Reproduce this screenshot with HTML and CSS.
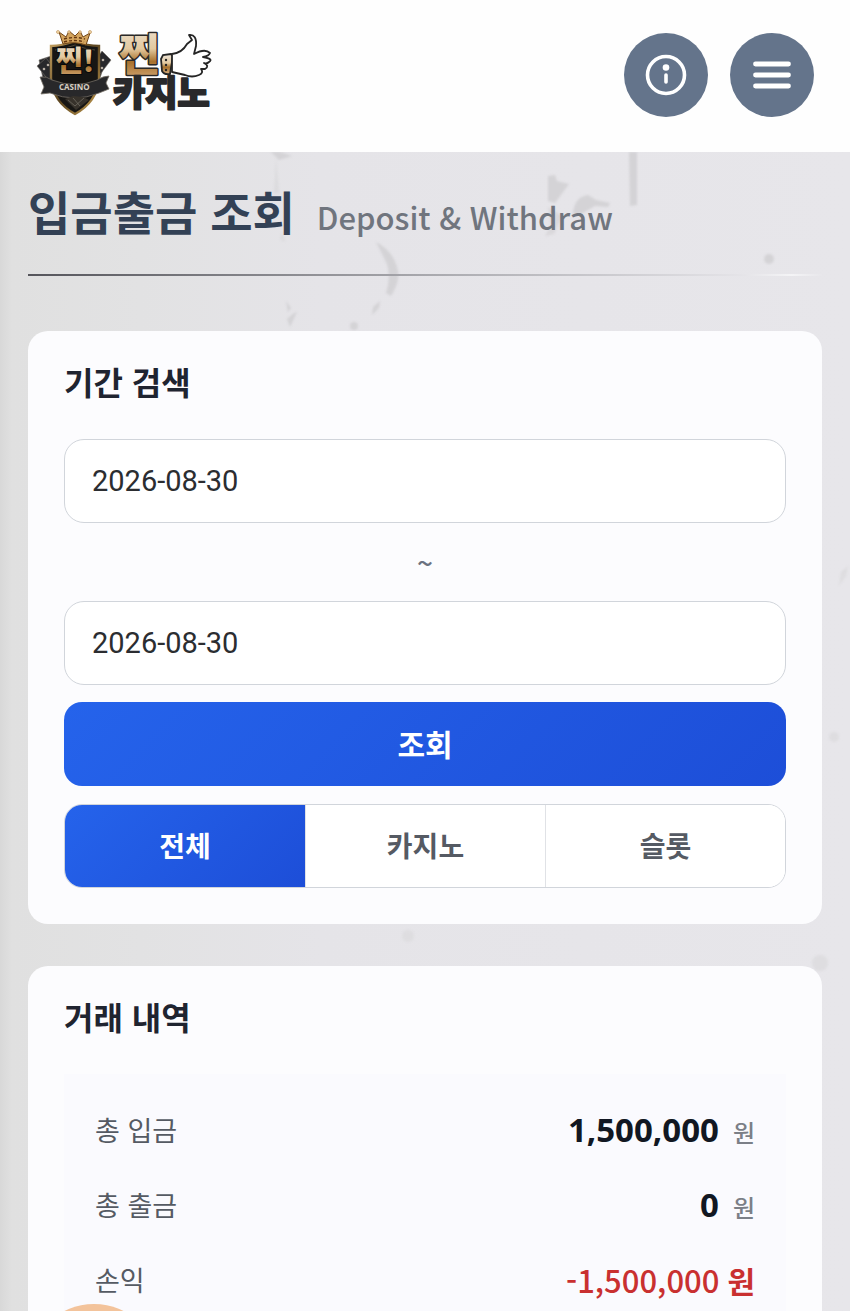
FILE: index.html
```html
<!DOCTYPE html>
<html lang="ko">
<head>
<meta charset="utf-8">
<meta name="viewport" content="width=device-width, initial-scale=1">
<title>입금출금 조회</title>
<link rel="stylesheet" href="styles.css">
</head>
<body>
<header class="topbar">
  <a class="logo" href="#" aria-label="찐 카지노">
    <svg width="180" height="92" viewBox="0 0 180 92">
      <defs>
        <linearGradient id="gold" x1="0" y1="0" x2="0" y2="1">
          <stop offset="0" stop-color="#eee6dc"/><stop offset="0.45" stop-color="#e3c99f"/><stop offset="0.65" stop-color="#a8712c"/><stop offset="1" stop-color="#d9b183"/>
        </linearGradient>
        <linearGradient id="rim" x1="0" y1="0" x2="1" y2="1">
          <stop offset="0" stop-color="#c4a05f"/><stop offset="0.5" stop-color="#5b4520"/><stop offset="1" stop-color="#c9a052"/>
        </linearGradient>
      </defs>
      <g fill="#28282b" stroke="#77726b" stroke-width="0.6">
        <path d="M3 31l12-4 5 22-12 5z"/><path d="M1 37l9-8 13 16-9 8z"/>
        <path d="M59 23l12 5-7 21-11-4z"/><path d="M66 22l9 9-13 17-9-7z"/>
      </g>
      <g fill="#b8aea4"><circle cx="8" cy="40" r="1.300"/><circle cx="12" cy="36" r="1.300"/><circle cx="67" cy="31" r="1.300"/><circle cx="66" cy="39" r="1.300"/></g>
      <path d="M15 17Q26 17 39 12Q52 17 63 17V50Q61 73 39 85Q17 73 15 50Z" fill="#171614" stroke="url(#rim)" stroke-width="2.4"/>
      <path d="M19 21Q29 20 39 16Q49 20 59 21" fill="none" stroke="#4d4435" stroke-width="1"/>
      <path d="M23 3l7 5 3-6 6 5 5-5 3 6 7-4-4 12Q39 12 27 15Z" fill="#d4a45d" stroke="#704417" stroke-width="1"/>
      <path d="M28 10q11-3 21 0M28 13q11-3 20 0" fill="none" stroke="#63340f" stroke-width="1.4" stroke-dasharray="3 2"/>
      <g fill="#f4dcae" stroke="#a8712c" stroke-width="0.5"><circle cx="22" cy="3" r="1.5"/><circle cx="33" cy="3" r="1.3"/><circle cx="44" cy="3" r="1.3"/><circle cx="54" cy="3" r="1.5"/></g>
      <text class="logo-badge" x="20" y="43">찐!</text>
      <path d="M4 48q7-1 12 3Q39 60 61 51q6-4 12-4l-3 7 3 6-10 4Q39 74 14 64L5 65l3-7Z" fill="#28282a" stroke="#756f66" stroke-width="0.8"/>
      <text class="logo-casino" x="23" y="61">CASINO</text>
      <path d="M29 70l8-3 10 1 6 3-13 10Z" fill="#37322b"/><path d="M32 71l7 6 9-8M37 69l7 8" stroke="#79746a" fill="none" stroke-width="0.7"/>
      <text class="logo-top" x="83" y="42">찐</text>
      <text class="logo-bottom" x="77" y="77">카지노</text>
      <path d="M135 25l-8 1-2 4 1 12q2 4 8 3l3-18Z" fill="url(#gold)" stroke="#242424" stroke-width="1.800"/>
      <path d="M136 25Q146 24 151 15L156 11L153 6Q161 5 160 17L158 25Q169 19 174 24Q173 27 167 28Q178 30 173 33Q171 35 168 34Q174 37 169 40L165 40Q168 44 163 46Q156 49 149 46L136 43Z" fill="#fff" stroke="#252525" stroke-width="1.8" stroke-linejoin="round"/>
      <g fill="#252525"><circle cx="130" cy="31" r="1.2"/><circle cx="130" cy="36" r="1.2"/><circle cx="130" cy="41" r="1.2"/></g>
    </svg>
  </a>
  <nav class="actions">
    <button class="round" type="button" aria-label="안내">
      <svg width="44" height="44" viewBox="0 0 44 44"><circle cx="22" cy="22" r="18.5" fill="none" stroke="#fff" stroke-width="3.600"/><circle cx="22" cy="14.5" r="3.3" fill="#fff"/><path d="M22 22v7" stroke="#fff" stroke-width="3.600" stroke-linecap="round"/></svg>
    </button>
    <button class="round" type="button" aria-label="메뉴">
      <svg width="44" height="44" viewBox="0 0 44 44"><path d="M5.5 11h33M5.5 22h33M5.5 33h33" stroke="#fff" stroke-width="4.800" stroke-linecap="round"/></svg>
    </button>
  </nav>
</header>
<main class="page">
  <svg class="stains" width="850" height="840" viewBox="0 0 850 840" aria-hidden="true">
    <g fill="#d4d3d6">
      <path d="M271 0h9l12 4-13 4Z"/><path d="M276 7l3 34h-5ZM282 80l3 10-5-3Z" opacity="0.5"/>
      <path d="M376 90Q394 99 398 119Q400 130 391 144L386 141Q391 126 387 112Z"/>
      <path d="M379 156l-7 7 1-8 7-6ZM297 160l-7 15-3-8 7-6ZM286 149l5 7-3 4Z"/><circle cx="354" cy="174" r="4"/>
      <path d="M629 0h8v53l-7 1Z"/><path d="M548 24l7-1 2 6 12 3-14 19-7-2Z"/>
      <path d="M573 62Q574 45 588 43l8 5 14 3-2 4-13-1-14 8Z"/><path d="M548 55l14 9-8 18-9 2 6-11Z" opacity="0.7"/>
      <circle cx="769" cy="107" r="5"/>
    </g>
    <g fill="#dedde0"><path d="M841 420l7-6-2 10-7 10Z"/><circle cx="834" cy="585" r="5"/><circle cx="408" cy="784" r="6"/><circle cx="820" cy="811" r="8"/></g>
  </svg>
  <div class="content">
    <div class="heading">
      <h1>입금출금 조회</h1>
      <p>Deposit &amp; Withdraw</p>
    </div>
    <form class="card">
      <h2>기간 검색</h2>
      <div class="period">
        <input class="date" type="text" value="2026-08-30" aria-label="시작일">
        <span class="tilde">~</span>
        <input class="date" type="text" value="2026-08-30" aria-label="종료일">
      </div>
      <button class="search" type="button">조회</button>
      <div class="tabs">
        <button class="tab active" type="button">전체</button>
        <button class="tab" type="button">카지노</button>
        <button class="tab" type="button">슬롯</button>
      </div>
    </form>
    <section class="card">
      <h2>거래 내역</h2>
      <dl class="summary">
        <div class="row"><dt>총 입금</dt><dd><strong>1,500,000</strong><span>원</span></dd></div>
        <div class="row"><dt>총 출금</dt><dd><strong>0</strong><span>원</span></dd></div>
        <div class="row"><dt>손익</dt><dd class="loss">-1,500,000 <b>원</b></dd></div>
      </dl>
    </section>
  </div>
</main>
<button class="floating" type="button" aria-label="고객센터"></button>
</body>
</html>
```
FILE: styles.css
```css
* { box-sizing: border-box; }

body {
  margin: 0;
  height: 100vh;
  display: flex;
  flex-direction: column;
  overflow: hidden;
  font-family: "Noto Sans CJK KR", sans-serif;
  color: #1f2430;
}

h1, h2, p, dl, dd { margin: 0; }

button { font: inherit; border: 0; padding: 0; cursor: pointer; }

.topbar {
  flex: none;
  display: flex;
  align-items: center;
  justify-content: space-between;
  height: 152px;
  padding: 0 36px 2px;
  background: #fefefe;
}

.logo, .logo svg, .round svg { display: block; }
.logo svg { overflow: visible; }

.logo-badge, .logo-top, .logo-bottom {
  font-weight: 900;
  paint-order: stroke;
  stroke-linejoin: round;
}
.logo-badge { font-size: 29px; fill: url(#gold); stroke: #090909; stroke-width: 2px; }
.logo-top { font-size: 44px; fill: url(#gold); stroke: #2b2927; stroke-width: 3px; }
.logo-bottom { font-size: 35px; fill: #29292b; stroke: #29292b; stroke-width: 2px; }
.logo-casino { font: 700 8px "Open Sans", sans-serif; fill: #d8cfc1; }

.actions { display: flex; gap: 22px; }

.round {
  width: 84px;
  height: 84px;
  display: grid;
  place-items: center;
  border-radius: 50%;
  background: #64748b;
}

.page {
  position: relative;
  flex: 1;
  min-height: 0;
  overflow-y: auto;
  scrollbar-width: none;
  background: linear-gradient(90deg, #d8d8d8 0, #e0e0e0 12px, #e2e2e3 140px, #e5e4e8 320px, #e7e6ea 100%);
}

.stains { position: absolute; top: 0; left: 0; filter: blur(1px); }

.content { position: relative; padding: 0 28px 42px; }

.heading {
  display: flex;
  align-items: baseline;
  gap: 22px;
  height: 124px;
  padding-top: 23px;
  margin-bottom: 55px;
  border-bottom: 2px solid;
  border-image: linear-gradient(90deg, #55555b, #a8a8ad 50%, #e5e4e8 90%, #f4f4f6 96%, #e7e6ea) 1;
}
.heading h1 { font-size: 46px; line-height: 70px; font-weight: 700; color: #334155; }
.heading p { font-size: 31px; line-height: 48px; font-weight: 500; color: #70757e; }

.card {
  padding: 34px 36px 36px;
  margin-bottom: 42px;
  border-radius: 20px;
  background: #fcfcfe;
}
.card h2 { margin-bottom: 42px; font-size: 32px; line-height: 32px; font-weight: 700; }

.period { display: flex; flex-direction: column; }

.date {
  width: 100%;
  height: 84px;
  padding: 0 27px;
  border: 1px solid #d1d5db;
  border-radius: 20px;
  background: #fff;
  font: 29px Roboto, sans-serif;
  color: #2b2d31;
}

.tilde { text-align: center; font-size: 28px; line-height: 78px; font-weight: 500; color: #6b7280; }

.search, .tab.active { color: #fff; background: linear-gradient(135deg, #2563eb, #1d4ed8); }

.search {
  width: 100%;
  height: 84px;
  margin-top: 17px;
  padding-bottom: 2px;
  border-radius: 18px;
  font-size: 30px;
  font-weight: 700;
}

.tabs {
  display: grid;
  grid-template-columns: repeat(3, 1fr);
  height: 84px;
  margin-top: 18px;
  border: 1px solid #d1d5db;
  border-radius: 18px;
  overflow: hidden;
  background: #fff;
}
.tab { padding-bottom: 2px; background: #fff; font-size: 28px; font-weight: 700; color: #555a63; }
.tab + .tab { border-left: 1px solid #e0e2e6; }

.summary { padding: 18px 31px; background: #fafafe; }

.row { display: flex; align-items: center; justify-content: space-between; height: 75px; }
.row dt { font-size: 27px; color: #555a63; }
.row dd { display: flex; align-items: baseline; gap: 14px; font-size: 24px; font-weight: 500; color: #7b7f87; }
.row strong { font: 700 33px "Noto Sans", sans-serif; color: #111722; }
.row .loss { gap: 8px; font-size: 31px; color: #c93030; }
.loss b { font-size: 30px; }

.floating {
  position: fixed;
  left: 28px;
  bottom: -125px;
  width: 132px;
  height: 132px;
  border-radius: 50%;
  background: #f3c39b;
}
```
